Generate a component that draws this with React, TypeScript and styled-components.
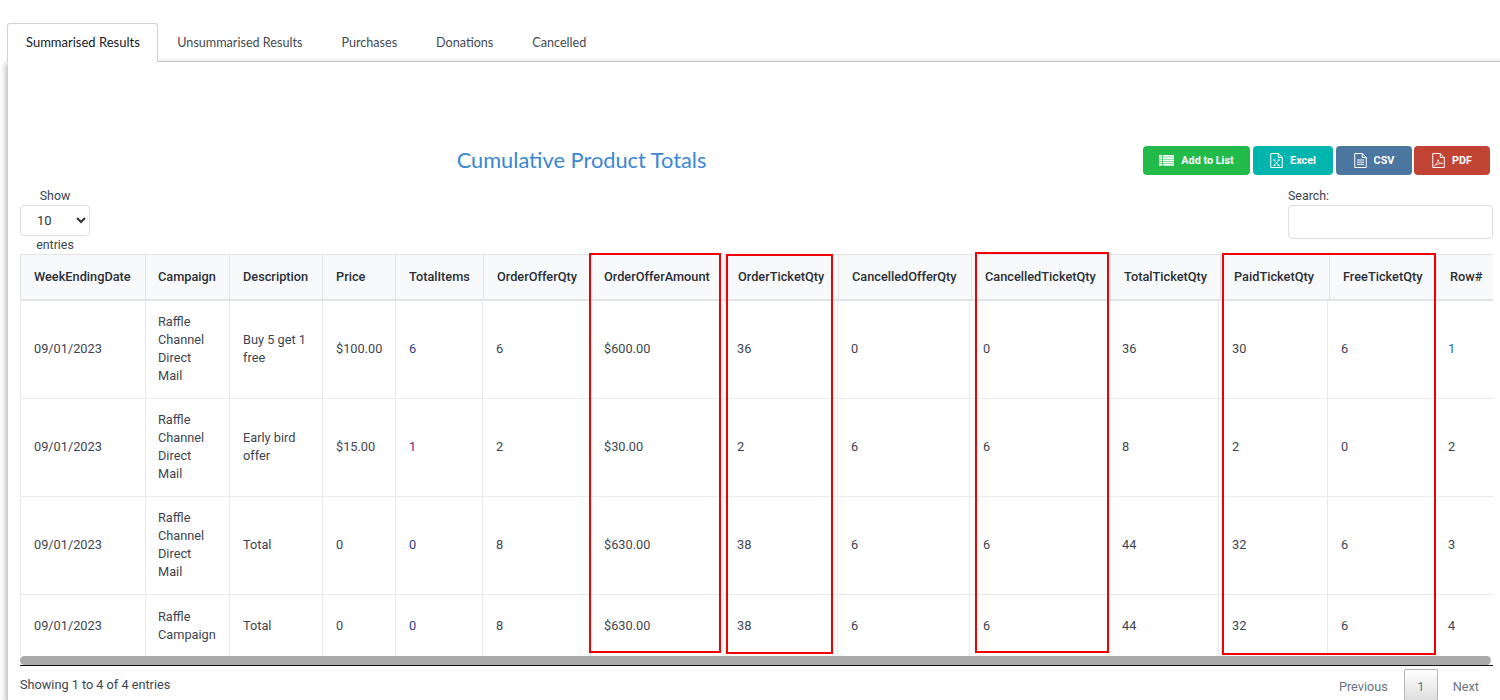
import React from "react";
import styled, {createGlobalStyle} from "styled-components";

const GlobalStyle = createGlobalStyle`
  html, body {
    margin: 0;
    height: 700px;
    overflow: hidden;
    background: #fff;
    font-family: Roboto, "Liberation Sans", sans-serif;
    font-size: 12.7px;
    color: #3d4450;
  }
`;

const Page = styled.div`
  position: relative;
  width: 1500px;
  height: 700px;
  overflow: hidden;
  padding: 23px 0 0 8px;
  box-sizing: border-box;
`;

const Tabs = styled.div`
  display: flex;
  height: 38px;
  position: relative;
  z-index: 1;
  margin-left: -1px;
`;

const Tab = styled.div<{ $active?: boolean }>`
  display: flex;
  align-items: center;
  padding: 0 ${({$active}) => ($active ? "17px" : "18.5px")} 2px ${({$active}) => ($active ? "18px" : "18.5px")};
  height: 39px;
  box-sizing: border-box;
  font-family: Lato, sans-serif;
  font-size: ${({$active}) => ($active ? "13px" : "12.6px")};
  color: ${({$active}) => ($active ? "#15191f" : "#444a52")};
  background: ${({$active}) => ($active ? "#fff" : "transparent")};
  border: 1px solid ${({$active}) => ($active ? "#d0d2d5" : "transparent")};
  border-bottom: none;
  border-radius: 3px 3px 0 0;
`;

const Panel = styled.div`
  border-top: 1px solid #c4c6c8;
  box-shadow: -2px 2px 6px rgba(0, 0, 0, 0.3);
  background: #fff;
  padding: 84px 0 0 12px;
  height: 641px;
  box-sizing: border-box;
  width: 1500px;
`;

const TitleRow = styled.div`
  display: flex;
  align-items: center;
  height: 29px;
  width: 1470px;
`;

const Title = styled.h2`
  flex: 1;
  margin: 0;
  padding-bottom: 3px;
  text-align: center;
  font-family: Lato, sans-serif;
  font-weight: 400;
  font-size: 21.8px;
  color: #3a87d3;
`;

const ExportGroup = styled.div`
  display: flex;
  gap: 3px;
`;

const ExportButton = styled.button<{ $bg: string; $w: number }>`
  display: flex;
  align-items: center;
  justify-content: center;
  gap: 7px;
  width: ${({$w}) => $w}px;
  height: 29px;
  padding: 0;
  border: none;
  border-radius: 4px;
  background: ${({$bg}) => $bg};
  color: #fff;
  font-family: Roboto, sans-serif;
  font-size: 10.8px;
  font-weight: 700;

  &:last-child {
    margin-left: -1px;
  }
`;

const Controls = styled.div`
  display: flex;
  justify-content: space-between;
  width: 1473px;
  height: 79px;
  padding-top: 13px;
  box-sizing: border-box;
`;

const LengthControl = styled.div`
  width: 70px;
  text-align: center;
  font-size: 12.4px;
  line-height: 15px;
`;

const LengthSelect = styled.select`
  display: block;
  width: 70px;
  height: 31px;
  margin: 2px 0 1px;
  padding: 0 0 0 12px;
  font-family: Roboto, sans-serif;
  font-size: 13px;
  color: #333;
  background: #fff;
  border: 1px solid #dcdfe3;
  border-radius: 4px;
`;

const SearchControl = styled.div`
  width: 205px;
  font-size: 12.4px;
  line-height: 15px;
`;

const SearchInput = styled.input`
  display: block;
  width: 205px;
  height: 34px;
  margin-top: 2px;
  box-sizing: border-box;
  border: 1px solid #dcdfe3;
  border-radius: 4px;
`;

const TableClip = styled.div`
  width: 1473px;
  overflow: hidden;
`;

const Table = styled.table`
  border-collapse: separate;
  border-spacing: 0;
  table-layout: fixed;
`;

const Head = styled.th`
  height: 47px;
  padding: 0 0 2px 13px;
  box-sizing: border-box;
  text-align: left;
  font-size: 12.75px;
  font-weight: 500;
  white-space: nowrap;
  color: #2a2f36;
  background: #f8f9fb;
  border-top: 1px solid #e2e3e5;
  border-right: 1px solid #e2e3e5;
  border-bottom: 2px solid #e2e3e5;

  &:first-child {
    border-left: 1px solid #e2e3e5;
  }

  &:nth-child(2) {
    padding-left: 12px;
  }
`;

const Cell = styled.td<{ $color?: string }>`
  padding: 12px 13px 13px;
  line-height: 18px;
  font-size: 12.75px;
  color: ${({$color}) => $color || "#3d4450"};
  border-right: 1px solid #ebebeb;
  border-bottom: 1px solid #ebebeb;
  box-sizing: border-box;

  &:first-child {
    border-left: 1px solid #ebebeb;
  }

  &:nth-child(2) {
    padding-left: 12px;
  }

  tr:last-child > & {
    padding-top: 13px;
    padding-bottom: 12px;
    border-bottom: none;
  }
`;

const ScrollBar = styled.div`
  width: 1473px;
  height: 10px;
  box-sizing: border-box;
  border-bottom: 1px solid #111;
`;

const ScrollThumb = styled.div`
  width: 1471px;
  height: 9px;
  background: #ababab;
  border-radius: 5px;
`;

const Footer = styled.div`
  display: flex;
  justify-content: space-between;
  width: 1473px;
  padding-top: 3px;
`;

const Info = styled.div`
  padding-top: 6px;
  line-height: 20px;
`;

const Pager = styled.div`
  display: flex;
  align-items: center;
  height: 34px;
  padding-right: 14px;
  color: #6c7480;
`;

const PageLink = styled.span`
  display: block;
`;

const PageCurrent = styled.span`
  display: flex;
  align-items: center;
  justify-content: center;
  width: 34px;
  height: 34px;
  margin: 0 15px 0 16px;
  box-sizing: border-box;
  border: 1px solid #b5b5b5;
  border-radius: 2px;
  background: linear-gradient(#fff, #dcdcdc);
`;

const Highlight = styled.div<{ $x: number; $y: number; $w: number; $h: number }>`
  position: absolute;
  left: ${({$x}) => $x}px;
  top: ${({$y}) => $y}px;
  width: ${({$w}) => $w}px;
  height: ${({$h}) => $h}px;
  box-sizing: border-box;
  border: 2px solid #f00000;
  pointer-events: none;
`;

const ListIcon = () => <svg width="15" height="11" viewBox="0 0 15 11" fill="#fff">
    {[0, 2.25, 4.5, 6.75, 9].map((y) => <React.Fragment key={y}>
        <rect x="0" y={y} width="3" height="1.7"/>
        <rect x="3.7" y={y} width="11.3" height="1.7"/>
    </React.Fragment>)}
</svg>;

const FileIcon = ({children}: { children: React.ReactNode }) =>
    <svg width="13" height="15" viewBox="0 0 13 15" fill="none" stroke="#fff" strokeWidth="1">
        <path d="M.75.5h7.5l4 4v10H.75z"/>
        <path d="M8.25.5v4h4"/>
        {children}
    </svg>;

const heads = ["WeekEndingDate", "Campaign", "Description", "Price", "TotalItems", "OrderOfferQty", "OrderOfferAmount", "OrderTicketQty", "CancelledOfferQty", "CancelledTicketQty", "TotalTicketQty", "PaidTicketQty", "FreeTicketQty", "Row#"];
const headWidths = [126, 84, 93, 73, 88, 107, 134, 114, 133, 139, 110, 109, 107, 70];
const bodyWidths = [126, 84, 93, 73, 87, 108, 133, 114, 132, 139, 110, 109, 107, 70];

const rows = [
    ["09/01/2023", "Raffle Channel Direct Mail", "Buy 5 get 1 free", "$100.00", "6", "6", "$600.00", "36", "0", "0", "36", "30", "6", "1"],
    ["09/01/2023", "Raffle Channel Direct Mail", "Early bird offer", "$15.00", "1", "2", "$30.00", "2", "6", "6", "8", "2", "0", "2"],
    ["09/01/2023", "Raffle Channel Direct Mail", "Total", "0", "0", "8", "$630.00", "38", "6", "6", "44", "32", "6", "3"],
    ["09/01/2023", "Raffle Campaign", "Total", "0", "0", "8", "$630.00", "38", "6", "6", "44", "32", "6", "4"],
];

const Colgroup = ({widths}: { widths: number[] }) => <colgroup>
    {widths.map((w, i) => <col key={i} width={w}/>)}
</colgroup>;

const totalOf = (widths: number[]) => widths.reduce((a, b) => a + b, 0);

const cellColor = (row: number, col: number) => {
    if (col === 4) return row === 1 ? "#5b2a6e" : "#27408b";
    if (col === 13 && row === 0) return "#1b6fa8";
    return undefined;
};

const App = () => {
    return <Page>
        <GlobalStyle/>
        <Tabs>
            <Tab $active>Summarised Results</Tab>
            <Tab>Unsummarised Results</Tab>
            <Tab>Purchases</Tab>
            <Tab>Donations</Tab>
            <Tab>Cancelled</Tab>
        </Tabs>
        <Panel>
            <TitleRow>
                <Title>Cumulative Product Totals</Title>
                <ExportGroup>
                    <ExportButton $bg="#22bb4a" $w={107}><ListIcon/>Add to List</ExportButton>
                    <ExportButton $bg="#00b5ad" $w={80}>
                        <FileIcon><path d="M4 7l5 5.5M9 7l-5 5.5M3 7h2.4M7.6 7H10M3 12.5h2.4M7.6 12.5H10" strokeWidth="1"/></FileIcon>
                        Excel
                    </ExportButton>
                    <ExportButton $bg="#4a76a0" $w={76}>
                        <FileIcon><path d="M3 7h7M3 9.2h7M3 11.4h7"/></FileIcon>
                        CSV
                    </ExportButton>
                    <ExportButton $bg="#c14333" $w={76}>
                        <FileIcon><path d="M2.5 12.8c2-1 3.2-3.4 3.5-6.2.6 2.6 1.8 3.6 4.4 3.9-3-.2-5.6.6-7.9 2.3z" strokeWidth=".8"/></FileIcon>
                        PDF
                    </ExportButton>
                </ExportGroup>
            </TitleRow>
            <Controls>
                <LengthControl>
                    Show
                    <LengthSelect defaultValue="10">
                        <option>10</option>
                    </LengthSelect>
                    entries
                </LengthControl>
                <SearchControl>
                    Search:
                    <SearchInput/>
                </SearchControl>
            </Controls>
            <TableClip>
                <Table style={{width: totalOf(headWidths)}}>
                    <Colgroup widths={headWidths}/>
                    <thead>
                    <tr>{heads.map((h) => <Head key={h}>{h}</Head>)}</tr>
                    </thead>
                </Table>
                <Table style={{width: totalOf(bodyWidths)}}>
                    <Colgroup widths={bodyWidths}/>
                    <tbody>
                    {rows.map((row, r) => <tr key={r}>
                        {row.map((value, c) => <Cell key={c} $color={cellColor(r, c)}>{value}</Cell>)}
                    </tr>)}
                    </tbody>
                </Table>
            </TableClip>
            <ScrollBar><ScrollThumb/></ScrollBar>
            <Footer>
                <Info>Showing 1 to 4 of 4 entries</Info>
                <Pager>
                    <PageLink>Previous</PageLink>
                    <PageCurrent>1</PageCurrent>
                    <PageLink>Next</PageLink>
                </Pager>
            </Footer>
        </Panel>
        <Highlight $x={589} $y={253} $w={132} $h={400}/>
        <Highlight $x={726} $y={254} $w={107} $h={400}/>
        <Highlight $x={975} $y={252} $w={134} $h={401}/>
        <Highlight $x={1222} $y={253} $w={214} $h={402}/>
    </Page>;
};

export default App;
